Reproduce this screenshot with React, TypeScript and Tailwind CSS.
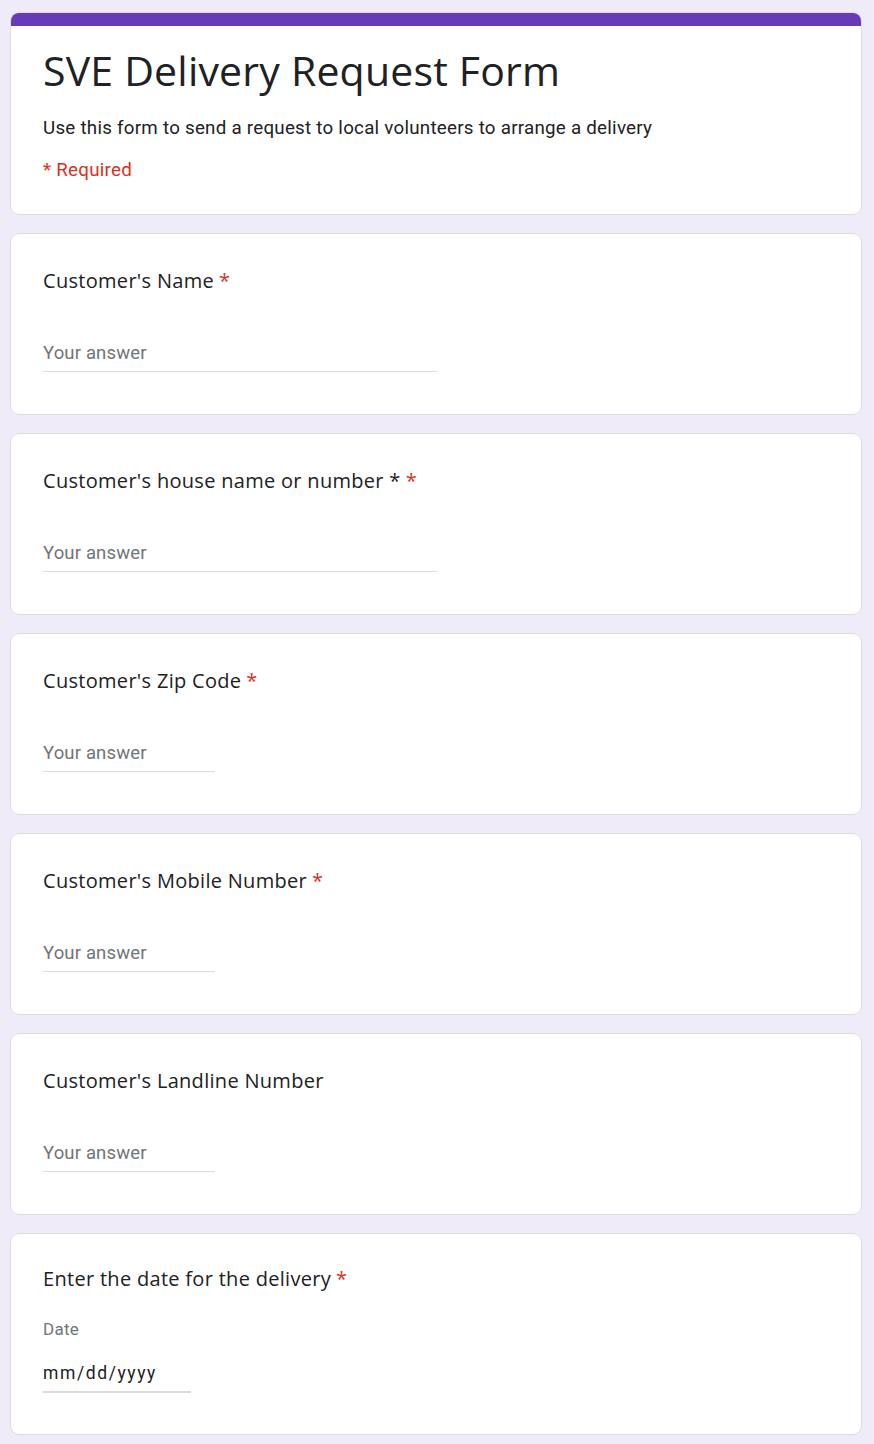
import React from 'react';

type Question = {
  title: string;
  required: boolean;
  wide: boolean;
};

const questions: Question[] = [
  { title: "Customer's Name", required: true, wide: true },
  { title: "Customer's house name or number *", required: true, wide: true },
  { title: "Customer's Zip Code", required: true, wide: false },
  { title: "Customer's Mobile Number", required: true, wide: false },
  { title: "Customer's Landline Number", required: false, wide: false },
];

const titleFont = { fontFamily: '"Open Sans", Roboto, sans-serif' };

function Card({ children, className = '' }: { children: React.ReactNode; className?: string }) {
  return (
    <div className={`w-[852px] bg-white border border-[#dadce0] rounded-[9px] ${className}`}>
      {children}
    </div>
  );
}

function Star() {
  return <span className="text-[#d93025] ml-[5px]">*</span>;
}

export default function App() {
  return (
    <div className="min-h-[1444px] bg-[#f0ebf8] pt-[12px] pl-[10px] font-['Roboto',sans-serif] text-[#202124]">
      <div className="flex flex-col gap-[18px]">
        <div className="w-[852px] rounded-[9px] overflow-hidden border border-[#dadce0] bg-white">
          <div className="h-[13px] bg-[#673ab7]" />
          <div className="px-[32px] pt-[20px] h-[188px]">
            <h1
              className="text-[41px] leading-[48px] tracking-[0.2px] text-[#202124]"
              style={{ fontFamily: '"Open Sans", sans-serif' }}
            >
              SVE Delivery Request Form
            </h1>
            <p className="mt-[22px] text-[18.75px] leading-[24px] tracking-[0.25px] text-[#202124]">
              Use this form to send a request to local volunteers to arrange a delivery
            </p>
            <p className="mt-[18px] text-[18.75px] leading-[24px] tracking-[0.25px] text-[#d93025]">
              * Required
            </p>
          </div>
        </div>

        {questions.map((q) => (
          <Card key={q.title} className="h-[182px] px-[32px] pt-[35px]">
            <div className="text-[20px] leading-[24px] tracking-[0.3px]" style={titleFont}>
              {q.title}
              {q.required && <Star />}
            </div>
            <div
              className={`mt-[48px] border-b border-[#dadce0] pb-[5px] ${q.wide ? 'w-[394px]' : 'w-[172px]'}`}
            >
              <span className="text-[18.5px] leading-[24px] tracking-[0.15px] text-[#70757a]">Your answer</span>
            </div>
          </Card>
        ))}

        <Card className="h-[202px] px-[32px] pt-[33px]">
          <div className="text-[20px] leading-[24px] tracking-[0.3px]" style={titleFont}>
            Enter the date for the delivery
            <Star />
          </div>
          <div className="mt-[28px] text-[17px] leading-[20px] tracking-[0.3px] text-[#70757a]">Date</div>
          <div className="mt-[22px] w-[148px] border-b-2 border-[#dadce0] pb-[5px]">
            <span className="text-[17.5px] leading-[24px] tracking-[1.6px] text-[#202124]">mm/dd/yyyy</span>
          </div>
        </Card>
      </div>
    </div>
  );
}
